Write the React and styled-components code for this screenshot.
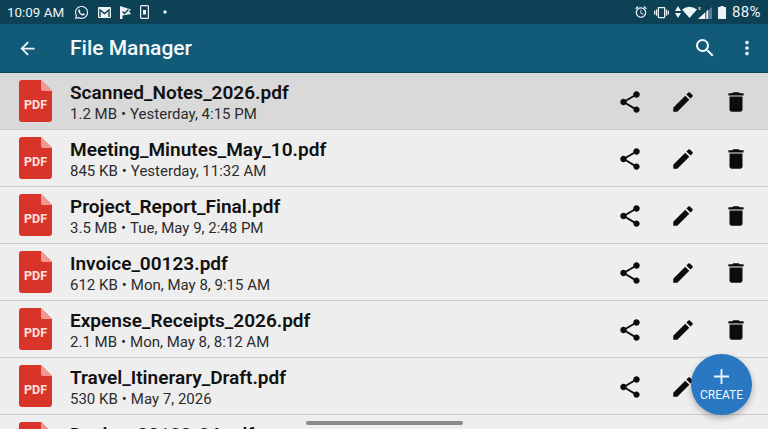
import React from "react";
import styled, { createGlobalStyle } from "styled-components";
import {
  MdArrowBack,
  MdSearch,
  MdMoreVert,
  MdShare,
  MdEdit,
  MdDelete,
  MdAccessAlarm,
  MdVibration,
} from "react-icons/md";
import { FaWhatsapp } from "react-icons/fa";

const GlobalStyle = createGlobalStyle`
  html, body {
    margin: 0;
    padding: 0;
    height: 100%;
    overflow: hidden;
    background: #eeeeee;
    font-family: Roboto, "Liberation Sans", sans-serif;
  }
`;

const Screen = styled.div`
  position: relative;
  width: 768px;
  height: 429px;
  overflow: hidden;
  background: #eeeeee;
`;

const StatusBar = styled.div`
  height: 24px;
  background: #0d4156;
  color: #eef4f6;
  display: flex;
  align-items: center;
  justify-content: space-between;
  padding: 0 7px;
`;

const StatusGroup = styled.div`
  display: flex;
  align-items: center;
  gap: ${(p) => p.$gap}px;
`;

const Time = styled.span`
  font-size: 13.4px;
`;

const NotificationIcons = styled.div`
  display: flex;
  align-items: center;
  gap: 9px;
  margin-left: 10px;
`;

const Battery = styled.span`
  font-size: 15px;
  letter-spacing: 0.4px;
`;

const AppBar = styled.header`
  height: 49px;
  box-sizing: border-box;
  background: #115b78;
  color: #f4f8fa;
  display: flex;
  align-items: center;
  padding: 0 10px 0 17px;
  border-bottom: 1px solid #0d4a62;
`;

const Title = styled.h1`
  margin: 0 0 0 32px;
  flex: 1;
  font-size: 21px;
  font-weight: 500;
`;

const AppBarActions = styled.div`
  display: flex;
  align-items: center;
  gap: 19px;
`;

const List = styled.div`
  display: flex;
  flex-direction: column;
`;

const Row = styled.div`
  height: 57px;
  flex: none;
  box-sizing: border-box;
  display: flex;
  align-items: center;
  padding: 0 19px;
  background: ${(p) => (p.$selected ? "#d9d9d9" : "#eeeeee")};
  border-bottom: 1px solid #cdcdcd;
`;

const FileText = styled.div`
  flex: 1;
  margin-left: 18px;
  min-width: 0;
  padding-top: 3px;
`;

const FileName = styled.div`
  font-size: 19.05px;
  line-height: 22px;
  font-weight: 600;
  color: #111111;
  white-space: nowrap;
`;

const FileMeta = styled.div`
  font-size: 15px;
  line-height: 20px;
  min-height: 20px;
  color: #2c2c2c;
  white-space: nowrap;
`;

const MetaDot = styled.span`
  margin: 0 4px;
`;

const RowActions = styled.div`
  display: flex;
  align-items: center;
  gap: 27px;
  color: #0c0c0c;
  padding-top: 1px;
`;

const PdfBadge = styled.svg`
  flex: none;
  display: block;
`;

const PdfLabel = styled.text`
  font-family: Roboto, "Liberation Sans", sans-serif;
  font-size: 12.5px;
  font-weight: 700;
  fill: #fbe3df;
`;

const DotIcon = styled.svg`
  margin-left: 5px;
`;

const Fab = styled.button`
  position: absolute;
  left: 691px;
  top: 354px;
  width: 61px;
  height: 61px;
  border: 0;
  padding: 2px 0 0;
  border-radius: 50%;
  background: #2a78c2;
  color: #f2f7fc;
  box-shadow: 0 3px 6px rgba(0, 0, 0, 0.28);
  display: flex;
  flex-direction: column;
  align-items: center;
  justify-content: center;
  gap: 4px;
  font-family: inherit;
  font-size: 12px;
  font-weight: 400;
`;

const FabLabel = styled.span`
  line-height: 14px;
`;

const HomeBar = styled.div`
  position: absolute;
  left: 306px;
  top: 421px;
  width: 157px;
  height: 4px;
  border-radius: 2px;
  background: #8a8a8a;
`;

const files = [
  { name: "Scanned_Notes_2026.pdf", size: "1.2 MB", date: "Yesterday, 4:15 PM", selected: true },
  { name: "Meeting_Minutes_May_10.pdf", size: "845 KB", date: "Yesterday, 11:32 AM" },
  { name: "Project_Report_Final.pdf", size: "3.5 MB", date: "Tue, May 9, 2:48 PM" },
  { name: "Invoice_00123.pdf", size: "612 KB", date: "Mon, May 8, 9:15 AM" },
  { name: "Expense_Receipts_2026.pdf", size: "2.1 MB", date: "Mon, May 8, 8:12 AM" },
  { name: "Travel_Itinerary_Draft.pdf", size: "530 KB", date: "May 7, 2026" },
  { name: "Design_00123-24.pdf" },
];

const PdfIcon = () => (
  <PdfBadge width="33" height="42" viewBox="0 0 33 42">
    <path
      d="M3 0H22L33 11V39A3 3 0 0 1 30 42H3A3 3 0 0 1 0 39V3A3 3 0 0 1 3 0Z"
      fill="#d9342a"
    />
    <path d="M22 0L33 11H24A2 2 0 0 1 22 9Z" fill="#ee9a90" />
    <PdfLabel x="16.5" y="29" textAnchor="middle">
      PDF
    </PdfLabel>
  </PdfBadge>
);

const GmailIcon = () => (
  <svg width="13" height="11" viewBox="0 0 13 11">
    <rect width="13" height="11" rx="1" fill="currentColor" />
    <path d="M2 10V3L6.5 6.5L11 3V10" fill="none" stroke="#0d4156" strokeWidth="1.4" />
  </svg>
);

const FlagIcon = () => (
  <svg width="11" height="13" viewBox="0 0 11 13">
    <path d="M0 0L11 3.5L9 5.5L11 8L2.5 9.5V13H0Z" fill="currentColor" />
    <path d="M2.5 5.5L4.5 7.5L8.5 3.5" fill="none" stroke="#0d4156" strokeWidth="1.4" />
  </svg>
);

const PhoneIcon = () => (
  <svg width="9" height="14" viewBox="0 0 9 14">
    <rect x="0.6" y="0.6" width="7.8" height="12.8" rx="1" fill="none" stroke="currentColor" strokeWidth="1.2" />
    <rect x="3" y="5" width="3" height="4.5" fill="currentColor" />
  </svg>
);

const Dot = () => (
  <DotIcon width="4" height="4" viewBox="0 0 4 4">
    <circle cx="2" cy="2" r="1.7" fill="currentColor" />
  </DotIcon>
);

const DataArrows = () => (
  <svg width="6" height="12" viewBox="0 0 6 12">
    <path d="M3 0L6 5H0ZM3 12L0 7H6Z" fill="currentColor" />
  </svg>
);

const WifiIcon = () => (
  <svg width="15" height="12" viewBox="0 0 15 12">
    <path d="M0 3.5Q7.5 -2 15 3.5L7.5 12Z" fill="currentColor" />
  </svg>
);

const SignalIcon = () => (
  <svg width="14" height="14" viewBox="0 0 14 14">
    <path d="M14 2V14H0Z" fill="currentColor" opacity="0.35" />
    <path d="M7 7.5V14H0ZM8.5 6V14H10V4.8Z" fill="currentColor" />
    <text x="0" y="5" fontSize="6" fill="currentColor" fontFamily="Roboto, sans-serif">
      x
    </text>
  </svg>
);

const BatteryIcon = () => (
  <svg width="8" height="13" viewBox="0 0 8 13">
    <path d="M2.5 0H5.5V1H8V13H0V1H2.5Z" fill="currentColor" />
  </svg>
);

const PlusIcon = () => (
  <svg width="15" height="15" viewBox="0 0 15 15">
    <path d="M7.5 0V15M0 7.5H15" stroke="currentColor" strokeWidth="1.8" />
  </svg>
);

const App = () => (
  <Screen>
    <GlobalStyle />
    <StatusBar>
      <StatusGroup $gap={0}>
        <Time>10:09 AM</Time>
        <NotificationIcons>
          <FaWhatsapp size={15} />
          <GmailIcon />
          <FlagIcon />
          <PhoneIcon />
          <Dot />
        </NotificationIcons>
      </StatusGroup>
      <StatusGroup $gap={6}>
        <MdAccessAlarm size={14} />
        <MdVibration size={15} />
        <StatusGroup $gap={1}>
          <DataArrows />
          <WifiIcon />
          <SignalIcon />
        </StatusGroup>
        <BatteryIcon />
        <Battery>88%</Battery>
      </StatusGroup>
    </StatusBar>
    <AppBar>
      <MdArrowBack size={21} />
      <Title>File Manager</Title>
      <AppBarActions>
        <MdSearch size={24} />
        <MdMoreVert size={22} />
      </AppBarActions>
    </AppBar>
    <List>
      {files.map((file) => (
        <Row key={file.name} $selected={file.selected}>
          <PdfIcon />
          <FileText>
            <FileName>{file.name}</FileName>
            <FileMeta>
              {file.size && (
                <>
                  {file.size}
                  <MetaDot>•</MetaDot>
                  {file.date}
                </>
              )}
            </FileMeta>
          </FileText>
          <RowActions>
            <MdShare size={26} />
            <MdEdit size={26} />
            <MdDelete size={26} />
          </RowActions>
        </Row>
      ))}
    </List>
    <Fab>
      <PlusIcon />
      <FabLabel>CREATE</FabLabel>
    </Fab>
    <HomeBar />
  </Screen>
);

export default App;
